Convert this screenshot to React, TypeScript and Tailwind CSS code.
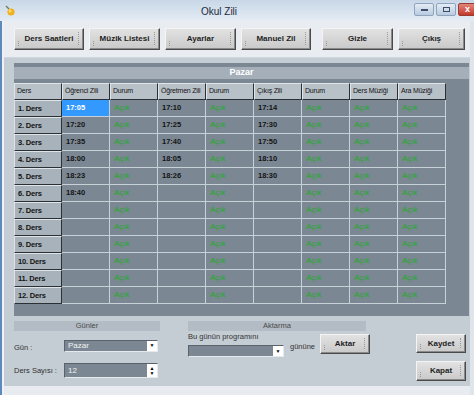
import { ReactNode } from 'react';

const font = { fontFamily: '"Liberation Sans", Arial, sans-serif' };

const headers = ['Öğrenci Zili', 'Durum', 'Öğretmen Zili', 'Durum', 'Çıkış Zili', 'Durum', 'Ders Müziği', 'Ara Müziği'];

const times: string[][] = [
  ['17:05', '17:10', '17:14'],
  ['17:20', '17:25', '17:30'],
  ['17:35', '17:40', '17:50'],
  ['18:00', '18:05', '18:10'],
  ['18:23', '18:26', '18:30'],
  ['18:40', '', ''],
  ['', '', ''],
  ['', '', ''],
  ['', '', ''],
  ['', '', ''],
  ['', '', ''],
  ['', '', ''],
];

function ToolButton({ label, w, className = '' }: { label: string; w: string; className?: string }) {
  return (
    <div
      className={`relative h-[22px] ${w} ${className} flex items-center justify-center bg-gradient-to-b from-[#e2e2e2] to-[#c9c9c9] border border-[#f4f4f4] border-b-[#4a4a4a] border-r-[#4a4a4a] shadow-[inset_-1px_-1px_0_#8a8a8a] text-[8px] font-bold text-[#1e1e1e]`}
    >
      {label}
      {/* grip marks */}
      <span className="absolute right-[3px] top-[3px] bottom-[4px] w-[2px] border-l border-dotted border-[#9a9a9a]" />
      <span className="absolute left-[3px] bottom-[3px] h-[5px] w-[4px] border-l border-dotted border-[#9a9a9a]" />
    </div>
  );
}

function Raised({ children, w, bg }: { children: ReactNode; w: string; bg: string }) {
  return (
    <div
      className={`${w} ${bg} h-[17px] shrink-0 flex items-center pl-[2px] border border-[#dfe4e8] border-b-[#2b3035] border-r-[#2b3035] text-[7px] tracking-[-0.2px] text-[#141414] overflow-hidden whitespace-nowrap`}
    >
      {children}
    </div>
  );
}

function DataCell({ value, selected }: { value: string; selected?: boolean }) {
  const acik = value === 'Açık';
  return (
    <div
      className={`w-[48px] h-[17px] shrink-0 flex items-center pl-[4px] border-r border-b border-[#c9d1d8] ${
        selected
          ? 'bg-[#3399ff] text-white font-bold text-[7.5px]'
          : acik
            ? 'text-[#1faa2a] text-[8px]'
            : 'text-[#141414] font-bold text-[7.5px]'
      }`}
    >
      {value}
    </div>
  );
}

function Select({ w, value, spin }: { w: string; value?: string; spin?: boolean }) {
  return (
    <div className={`${w} ${spin ? 'h-[15px]' : 'h-[12px]'} flex bg-[#7b8894] border border-[#5a636c] border-b-[#e6eaee] border-r-[#e6eaee]`}>
      <div className="flex-1 flex items-center pl-[3px] text-[8px] text-[#f2f2f2]">{value}</div>
      <div className="w-[10px] bg-white flex flex-col items-center justify-center text-[5px] leading-[5px] text-black">
        {spin ? (
          <>
            <span>▲</span>
            <span>▼</span>
          </>
        ) : (
          <span>▼</span>
        )}
      </div>
    </div>
  );
}

export default function App() {
  return (
    <div className="w-[474px] h-[395px] overflow-hidden bg-[#e6ebf0] flex flex-col" style={font}>
      {/* Title bar */}
      <div className="h-[21px] shrink-0 flex items-center overflow-hidden bg-gradient-to-b from-[#c8d7e7] to-[#e4ecf4]">
        <div className="w-[18px] pl-[4px] flex items-center">
          <svg width="12" height="12" viewBox="0 0 12 12">
            <path d="M2 1 L5 4" stroke="#6a7a4a" strokeWidth="1.2" />
            <circle cx="7" cy="7" r="3.6" fill="#f0b020" />
            <circle cx="6" cy="6" r="1.4" fill="#ffe070" />
          </svg>
        </div>
        <div className="flex-1 text-center text-[10px] text-[#1b2a3c] pt-[1px] pl-[6px]">Okul Zili</div>
        <div className="flex items-center gap-[2px] pb-[2px] shrink-0 mr-[-8px]">
          <div className="w-[20px] h-[13px] rounded-[2px] border border-[#8ea3bd] bg-gradient-to-b from-[#e4ecf5] to-[#b9cbe0] flex items-center justify-center">
            <div className="w-[7px] h-[2px] bg-[#3d4e66]" />
          </div>
          <div className="w-[20px] h-[13px] rounded-[2px] border border-[#8ea3bd] bg-gradient-to-b from-[#e4ecf5] to-[#b9cbe0] flex items-center justify-center">
            <div className="w-[7px] h-[5px] border border-[#3d4e66]" />
          </div>
          <div className="w-[24px] h-[13px] rounded-l-[2px] border border-[#9a3a30] bg-gradient-to-b from-[#e0857a] to-[#c2372a] flex items-center justify-start pl-[6px] text-[9px] font-bold text-white leading-none">
            x
          </div>
        </div>
      </div>

      <div className="flex-1 flex">
        {/* left frame */}
        <div className="w-[2px] bg-[#5d89bb]" />
        <div className="w-[2px] bg-[#eef2f6]" />

        <div className="flex-1 flex flex-col">
          {/* Toolbar */}
          <div className="h-[37px] shrink-0 flex pt-[7px] pl-[10px] border-b border-[#cfd6dd] bg-[#e9edf1]">
            <ToolButton label="Ders Saatleri" w="w-[70px]" />
            <ToolButton label="Müzik Listesi" w="w-[71px]" className="ml-[5px]" />
            <ToolButton label="Ayarlar" w="w-[71px]" className="ml-[5px]" />
            <ToolButton label="Manuel Zil" w="w-[70px]" className="ml-[5px]" />
            <ToolButton label="Gizle" w="w-[71px]" className="ml-[11px]" />
            <ToolButton label="Çıkış" w="w-[67px]" className="ml-[5px]" />
          </div>

          {/* Form */}
          <div className="h-[328px] shrink-0 bg-[#c4ccd4] pt-[5px] pl-[10px] flex flex-col">
            {/* Grid panel */}
            <div className="w-[455px] h-[253px] bg-[#7b8792] pt-[4px]">
              <div className="h-[12px] bg-[#a4afba] flex items-center justify-center text-[9px] font-bold text-white">Pazar</div>
              <div className="mt-[4px]">
                <div className="flex">
                  <Raised w="w-[48px]" bg="bg-[#b8c0c8]">Ders</Raised>
                  {headers.map((h, i) => (
                    <Raised key={i} w="w-[48px]" bg="bg-[#b8c0c8]">
                      {h}
                    </Raised>
                  ))}
                </div>
                {times.map((t, r) => (
                  <div key={r} className="flex">
                    <Raised w="w-[48px]" bg="bg-[#a8b2bb]">
                      <span className="font-bold text-[7.5px] pl-[1px]">{r + 1}. Ders</span>
                    </Raised>
                    <DataCell value={t[0]} selected={r === 0} />
                    <DataCell value="Açık" />
                    <DataCell value={t[1]} />
                    <DataCell value="Açık" />
                    <DataCell value={t[2]} />
                    <DataCell value="Açık" />
                    <DataCell value="Açık" />
                    <DataCell value="Açık" />
                  </div>
                ))}
              </div>
            </div>

            {/* Bottom controls */}
            <div className="flex mt-[5px] text-[7.5px] text-[#333]">
              {/* Günler */}
              <div className="w-[146px] flex flex-col">
                <div className="h-[10px] bg-[#b3bcc5] flex items-center justify-center text-[#4a4a4a]">Günler</div>
                <div className="flex items-center mt-[7px]">
                  <div className="w-[50px] pt-[4px]">Gün :</div>
                  <Select w="w-[94px]" value="Pazar" />
                </div>
                <div className="flex items-center mt-[10px]">
                  <div className="w-[50px]">Ders Sayısı :</div>
                  <Select w="w-[94px]" value="12" spin />
                </div>
              </div>

              {/* Aktarma */}
              <div className="w-[180px] ml-[28px] flex flex-col">
                <div className="w-[178px] h-[10px] bg-[#b3bcc5] flex items-center justify-center text-[#4a4a4a]">Aktarma</div>
                <div className="flex items-start mt-[1px]">
                  <div className="flex flex-col">
                    <div className="leading-[10px]">Bu günün programını</div>
                    <div className="mt-[3px]">
                      <Select w="w-[96px]" />
                    </div>
                  </div>
                  <div className="leading-[10px] mt-[10px] ml-[6px]">gününe</div>
                  <div className="mt-[2px] ml-[5px]">
                    <ToolButton label="Aktar" w="w-[50px] !h-[20px]" />
                  </div>
                </div>
              </div>

              {/* Kaydet / Kapat */}
              <div className="ml-[48px] flex flex-col pt-[13px] gap-[8px]">
                <ToolButton label="Kaydet" w="w-[50px] !h-[19px]" />
                <ToolButton label="Kapat" w="w-[50px] !h-[20px]" />
              </div>
            </div>
          </div>

          <div className="flex-1 bg-[#e8ecf0]" />
        </div>

        {/* right frame */}
        <div className="w-[4px] bg-[#dfe5eb]" />
      </div>
    </div>
  );
}
